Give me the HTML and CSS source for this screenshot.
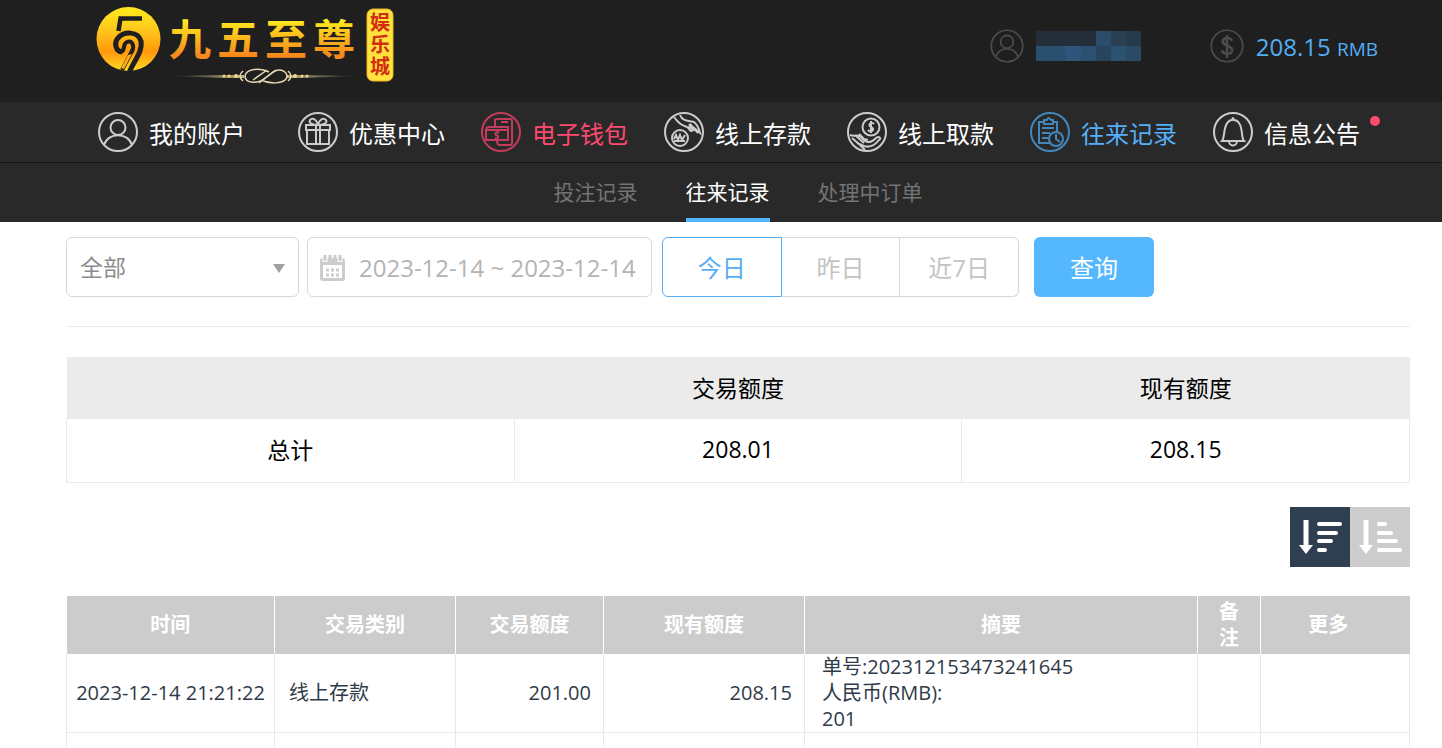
FILE: index.html
```html
<!DOCTYPE html>
<html lang="zh-CN">
<head>
    <meta charset="UTF-8">
    <meta name="viewport" content="width=device-width, initial-scale=1.0">
    <title>往来记录 - 九五至尊娱乐城</title>
    <link rel="stylesheet" href="styles.css">
</head>
<body>
    <header class="topbar">
        <a href="#" class="logo">
            <svg width="300" height="94" viewBox="0 -7 300 94">
                <defs>
                    <linearGradient id="gold" x1="0" y1="0" x2="0" y2="1">
                        <stop offset="0" stop-color="#ffec1c"/>
                        <stop offset="0.35" stop-color="#ffc81c"/>
                        <stop offset="0.7" stop-color="#ff980c"/>
                        <stop offset="1" stop-color="#ffdc28"/>
                    </linearGradient>
                    <linearGradient id="goldText" x1="0" y1="0" x2="0" y2="1">
                        <stop offset="0.2" stop-color="#fff01e"/>
                        <stop offset="0.8" stop-color="#f78a1c"/>
                    </linearGradient>
                    <linearGradient id="line" x1="0" y1="0" x2="1" y2="0">
                        <stop offset="0" stop-color="#d8c48c" stop-opacity="0"/>
                        <stop offset="0.5" stop-color="#f3e3b0"/>
                        <stop offset="1" stop-color="#d8c48c" stop-opacity="0"/>
                    </linearGradient>
                </defs>
                <circle cx="32.500" cy="32" r="32" fill="url(#gold)"/>
                <g fill="none" stroke="#1f1f1f">
                    <path stroke-width="4.500" d="M46 11.500H24.500L22.500 24"/>
                    <path stroke-width="5" d="M26 45C19 44 18 35 22 31C28 24 42 24 45 34C47 45 37 55 33 66"/>
                    <path stroke-width="4" d="M25 45C30 43 26 37 31 35C36 33 39 39 36 44L26 63"/>
                </g>
                <path fill="#ffa814" d="M36 47L28 62L25 61L32 48Z"/>
                <g class="logo-name">
                    <text x="73" y="48">九</text>
                    <text x="121" y="48">五</text>
                    <text x="169" y="48">至</text>
                    <text x="217" y="48">尊</text>
                </g>
                <path d="M74 69L130 68H204L262 69L204 71H130Z" fill="url(#line)"/>
                <rect x="148" y="63" width="42" height="13" fill="#1f1f1f"/>
                <g fill="none" stroke="#e4d8b0" stroke-width="1.500">
                    <path d="M173 65C164 60 150 62 149 69C149 77 163 77 169 71L177 65C185 60 194 66 190 72C186 77 173 77 165 73"/>
                    <path d="M157 73L171 63M163 76L180 63M147 64Q141 69 147 74M192 64Q198 69 192 74"/>
                </g>
                <g fill="#f1d77c">
                    <circle cx="128" cy="69" r="1.500"/><circle cx="133" cy="69" r="1.500"/><circle cx="140" cy="69" r="2"/>
                    <circle cx="199" cy="69" r="2"/><circle cx="206" cy="69" r="1.500"/><circle cx="211" cy="69" r="1.500"/>
                </g>
                <rect x="271" y="2" width="26" height="72" rx="6" fill="#ffe23c" stroke="#f0b224"/>
                <text class="logo-seal"><tspan x="274" y="23">娱</tspan><tspan x="274" y="45">乐</tspan><tspan x="274" y="67">城</tspan></text>
            </svg>
        </a>
        <div class="account">
            <div class="user">
                <svg class="icon-small" viewBox="0 0 40 40"><circle cx="20" cy="20" r="18.500"/><circle cx="20" cy="15" r="7.500"/><path d="M7 33C11 20 29 20 33 33"/></svg>
                <svg class="user-name" width="105" height="30" viewBox="0 0 7 2" shape-rendering="crispEdges">
                    <path fill="#232e38" d="M0 0h4v1H0z"/>
                    <path fill="#2b4d6a" d="M4 0h1v1H4z"/>
                    <path fill="#293f54" d="M5 0h1v1H5z"/>
                    <path fill="#263a4c" d="M6 0h1v1H6z"/>
                    <path fill="#2b4f6f" d="M0 1h2v1H0z"/>
                    <path fill="#2d567a" d="M2 1h1v1H2z"/>
                    <path fill="#2b5070" d="M3 1h1v1H3z"/>
                    <path fill="#29445e" d="M4 1h1v1H4z"/>
                    <path fill="#2c5272" d="M5 1h1v1H5z"/>
                    <path fill="#2a4a67" d="M6 1h1v1H6z"/>
                </svg>
            </div>
            <div class="balance">
                <svg class="icon-small" viewBox="0 0 40 40"><circle cx="20" cy="20" r="18.500"/><path stroke-width="3" d="M26 14C24 9 15 10 15 15C15 20 26 19 26 25C26 30 16 31 14 25M20 7V34"/></svg>
                <span>208.15 <small>RMB</small></span>
            </div>
        </div>
    </header>

    <nav class="menu">
        <a href="#">
            <svg viewBox="0 0 40 40"><circle cx="20" cy="20" r="19"/><circle cx="20" cy="15.500" r="7.500"/><path d="M6 33C10 20 30 20 34 33"/></svg>
            我的账户
        </a>
        <a href="#">
            <svg viewBox="0 0 40 40"><circle cx="20" cy="20" r="19"/><path d="M8 13H32V18H8ZM9 18V32H31V18M18 13V32M22 13V32M20 13C15 13 10 11 12 8C15 5 19 8 20 13C21 8 25 5 28 8C30 11 25 13 20 13"/></svg>
            优惠中心
        </a>
        <a href="#" class="wallet">
            <svg viewBox="0 0 40 40"><circle cx="20" cy="20" r="19"/><path d="M14 14V8Q14 7 16 7H29Q31 7 31 9V31Q31 33 29 33H19Q16 33 16 29M20 10H27M5 18V28H27V15H8Q5 15 5 18H27"/><path d="M18 21C16 19 13 21 15 23C18 24 18 27 14 26"/></svg>
            电子钱包
        </a>
        <a href="#">
            <svg viewBox="0 0 40 40"><circle cx="20" cy="20" r="19"/><circle cx="16" cy="26" r="8"/><path d="M10 27L12 23L14 28L16 23L18 28L21 23M10 29H21M10 5C15 12 18 13 23 15C26 17 26 21 29 18L25 12M16 3C18 9 25 9 30 10C34 13 35 17 36 21L29 15M26 12L34 21M24 15L31 18"/></svg>
            线上存款
        </a>
        <a href="#">
            <svg viewBox="0 0 40 40"><circle cx="20" cy="20" r="19"/><circle cx="24" cy="15" r="8.500"/><path d="M27 12C25 9 20 13 24 15C29 17 24 21 21 18M24 9V21M3 23C8 25 11 22 14 25L18 29C21 31 25 30 29 26C32 24 35 26 32 28C28 33 23 36 17 34L10 31M8 23L17 31M12 22L17 27L21 28M5 26L12 32L18 38"/></svg>
            线上取款
        </a>
        <a href="#" class="active">
            <svg viewBox="0 0 40 40"><circle cx="20" cy="20" r="19"/><path d="M15 10H9V31H20M22 10H27V20M14 8H17Q18 4 21 8H23V12H14ZM12 16H24M12 21H20M12 26H18"/><circle cx="26" cy="27" r="7"/><path d="M26 22V27L30 30"/></svg>
            往来记录
        </a>
        <a href="#" class="notice">
            <svg viewBox="0 0 40 40"><circle cx="20" cy="20" r="19"/><path d="M9 29C12 26 10 15 15 10Q17 8 19 8Q20 4 21 8Q24 8 26 11C30 16 28 26 31 29ZM16 29C16 35 24 35 24 29"/></svg>
            信息公告
        </a>
    </nav>

    <nav class="submenu">
        <a href="#">投注记录</a>
        <a href="#" class="active">往来记录</a>
        <a href="#">处理中订单</a>
    </nav>

    <main>
        <form class="filter">
            <div class="select-box">
                <select name="type" aria-label="交易类别">
                    <option>全部</option>
                    <option>线上存款</option>
                    <option>线上取款</option>
                </select>
            </div>
            <label class="date-box">
                <svg width="25" height="27" viewBox="0 0 25 27">
                    <path fill="#ccc" fill-rule="evenodd" d="M3 4H22Q25 4 25 7V24Q25 27 22 27H3Q0 27 0 24V7Q0 4 3 4ZM3 11V24H22V11Z"/>
                    <path stroke="#fff" stroke-width="5" d="M5 0V8M20 0V8"/>
                    <path stroke="#ccc" stroke-width="3" d="M5 1V7M20 1V7M10 1V7M15 1V7"/>
                    <path stroke="#ccc" stroke-width="3" stroke-dasharray="3 2" d="M6 16H19M6 21H19"/>
                </svg>
                <input type="text" name="date" value="2023-12-14 ~ 2023-12-14" aria-label="日期">
            </label>
            <div class="days">
                <button type="button" class="active">今日</button>
                <button type="button">昨日</button>
                <button type="button">近7日</button>
            </div>
            <button type="submit" class="search">查询</button>
        </form>

        <table class="total">
            <thead>
                <tr><th></th><th>交易额度</th><th>现有额度</th></tr>
            </thead>
            <tbody>
                <tr><td>总计</td><td>208.01</td><td>208.15</td></tr>
            </tbody>
        </table>

        <div class="sort">
            <button type="button" class="active" aria-label="降序">
                <svg viewBox="0 0 60 60"><path stroke-width="5" d="M16 13V40"/><path class="head" d="M9 38H23L16 47Z"/><path stroke-width="4" stroke-linecap="round" d="M29 17H50M29 26H46M29 34H41M29 43H35"/></svg>
            </button>
            <button type="button" aria-label="升序">
                <svg viewBox="0 0 60 60"><path stroke-width="5" d="M16 13V40"/><path class="head" d="M9 38H23L16 47Z"/><path stroke-width="4" stroke-linecap="round" d="M29 17H35M29 26H41M29 34H46M29 43H50"/></svg>
            </button>
        </div>

        <table class="records">
            <colgroup>
                <col class="col-time">
                <col class="col-type">
                <col class="col-amount">
                <col class="col-left">
                <col>
                <col class="col-note">
                <col class="col-more">
            </colgroup>
            <thead>
                <tr>
                    <th>时间</th>
                    <th>交易类别</th>
                    <th>交易额度</th>
                    <th>现有额度</th>
                    <th>摘要</th>
                    <th>备注</th>
                    <th>更多</th>
                </tr>
            </thead>
            <tbody>
                <tr>
                    <td class="time">2023-12-14 21:21:22</td>
                    <td>线上存款</td>
                    <td class="num">201.00</td>
                    <td class="num">208.15</td>
                    <td class="detail">单号:202312153473241645<br>人民币(RMB):<br>201</td>
                    <td></td>
                    <td></td>
                </tr>
                <tr class="empty">
                    <td></td><td></td><td></td><td></td><td></td><td></td><td></td>
                </tr>
            </tbody>
        </table>
    </main>
</body>
</html>
```
FILE: styles.css
```css
* {
    box-sizing: border-box;
}
body {
    margin: 0;
    background-color: #fff;
    color: #000;
    font-family: "Open Sans", "Noto Sans CJK SC", sans-serif;
    font-size: 20px;
}
a {
    color: inherit;
    text-decoration: none;
}
button, input, select {
    font-family: inherit;
    margin: 0;
}
button {
    cursor: pointer;
}
svg {
    display: block;
    flex: none;
}

/* header */
.topbar {
    display: flex;
    justify-content: space-between;
    height: 102px;
    padding: 0 64px 0 96px;
    background-color: #1f1f1f;
}
.logo-name {
    font-family: "Noto Sans CJK SC", sans-serif;
    font-size: 42px;
    font-weight: bold;
    fill: url(#goldText);
}
.logo-seal {
    font-family: "Noto Sans CJK SC", sans-serif;
    font-size: 20px;
    font-weight: bold;
    fill: #d22c12;
}
.account {
    display: flex;
    gap: 69px;
    height: 92px;
    align-items: center;
    color: #52aef7;
    font-size: 24px;
}
.user, .balance {
    display: flex;
    align-items: center;
    gap: 12px;
}
.balance small {
    font-size: 19px;
}
.icon-small {
    width: 34px;
    height: 34px;
    fill: none;
    stroke: #4c4c4c;
    stroke-width: 2;
}

/* menu */
.menu {
    display: flex;
    gap: 36px;
    height: 60px;
    padding-left: 98px;
    background-color: #292929;
    color: #fff;
    font-size: 24px;
}
.menu a {
    display: flex;
    align-items: center;
    gap: 11px;
    white-space: nowrap;
}
.menu a:first-child {
    margin-right: 17px;
}
.menu svg {
    width: 40px;
    height: 40px;
    fill: none;
    stroke: #ccc;
    stroke-width: 2;
}
.menu .wallet {
    color: #ff4a70;
}
.menu .wallet svg {
    stroke: #c43c5b;
}
.menu .active {
    color: #55b0fa;
}
.menu .active svg {
    stroke: #4288bd;
}
.menu .notice {
    position: relative;
}
.notice::after {
    content: "";
    position: absolute;
    top: 14px;
    right: -20px;
    width: 10px;
    height: 10px;
    border-radius: 50%;
    background-color: #ff4a70;
}
.submenu {
    display: flex;
    justify-content: center;
    gap: 48px;
    height: 60px;
    padding: 0 32px 0 66px;
    border-top: 1px solid #151515;
    background-color: #292929;
    color: #747474;
    font-size: 21px;
    line-height: 58px;
}
.submenu .active {
    color: #fff;
    border-bottom: 4px solid #55b5fc;
}

/* filter */
main {
    padding: 15px 32px 0 66px;
}
.filter {
    display: flex;
    height: 90px;
    margin-bottom: 30px;
    border-bottom: 1px solid #ececec;
}
.select-box {
    position: relative;
    width: 233px;
    height: 60px;
    margin-right: 8px;
}
.select-box::after {
    content: "";
    position: absolute;
    top: 27px;
    right: 14px;
    border: 6px solid transparent;
    border-top: 9px solid #a0a0a0;
    border-bottom: 0;
}
.select-box select {
    appearance: none;
    width: 100%;
    height: 60px;
    padding: 0 13px;
    border: 1px solid #d8d8d8;
    border-radius: 6px;
    background-color: #fff;
    color: #8c8c8c;
    font-size: 23px;
}
.date-box {
    display: flex;
    align-items: center;
    gap: 14px;
    width: 345px;
    height: 60px;
    margin-right: 10px;
    padding-left: 12px;
    border: 1px solid #d8d8d8;
    border-radius: 6px;
}
.date-box input {
    width: 290px;
    padding: 0;
    border: 0;
    color: #b4b4b4;
    font-size: 24px;
}
.days {
    display: flex;
    width: 357px;
    margin-right: 15px;
}
.days button {
    flex: 1;
    height: 60px;
    padding: 0 0 2px;
    border: 1px solid #d8d8d8;
    border-left-width: 0;
    background-color: #fff;
    color: #c4c4c4;
    font-size: 24px;
}
.days .active {
    border: 1px solid #55aef5;
    border-radius: 6px 0 0 6px;
    color: #55aef5;
}
.days button:last-child {
    border-radius: 0 6px 6px 0;
}
.search {
    width: 120px;
    height: 60px;
    padding: 0 0 2px;
    border: 0;
    border-radius: 6px;
    background-color: #55b8ff;
    color: #fff;
    font-size: 24px;
}

/* tables */
table {
    width: 100%;
    border-collapse: collapse;
    table-layout: fixed;
}
.total {
    font-size: 23px;
    text-align: center;
}
.total th {
    height: 61px;
    padding: 0;
    background-color: #ebebeb;
    font-weight: normal;
}
.total td {
    height: 64px;
    padding: 0 0 2px;
    border: 1px solid #ebebeb;
}
.sort {
    display: flex;
    justify-content: flex-end;
    margin: 24px 0 29px;
}
.sort button {
    width: 60px;
    height: 60px;
    padding: 0;
    border: 0;
    background-color: #ccc;
}
.sort .active {
    background-color: #2f3e51;
}
.sort svg {
    stroke: #fff;
}
.sort .head {
    fill: #fff;
    stroke: none;
}
.records {
    color: #303a48;
    line-height: 26px;
}
.col-time {
    width: 208px;
}
.col-type {
    width: 181px;
}
.col-amount {
    width: 148px;
}
.col-left {
    width: 201px;
}
.col-note {
    width: 63px;
}
.col-more {
    width: 149px;
}
.records th {
    height: 58px;
    padding: 3px 20px;
    border-right: 1px solid #fff;
    background-color: #ccc;
    color: #fff;
}
.records th:last-child {
    padding-right: 34px;
    border-right: 0;
}
.records td {
    padding: 0 14px;
    border: 1px solid #e8e8e8;
    border-top: 0;
}
.records .time {
    padding: 0 4px;
    text-align: center;
    white-space: nowrap;
}
.records .num {
    padding-right: 12px;
    text-align: right;
}
.records .detail {
    padding-left: 17px;
}
.records .empty td {
    height: 15px;
    border-bottom: 0;
}
```
